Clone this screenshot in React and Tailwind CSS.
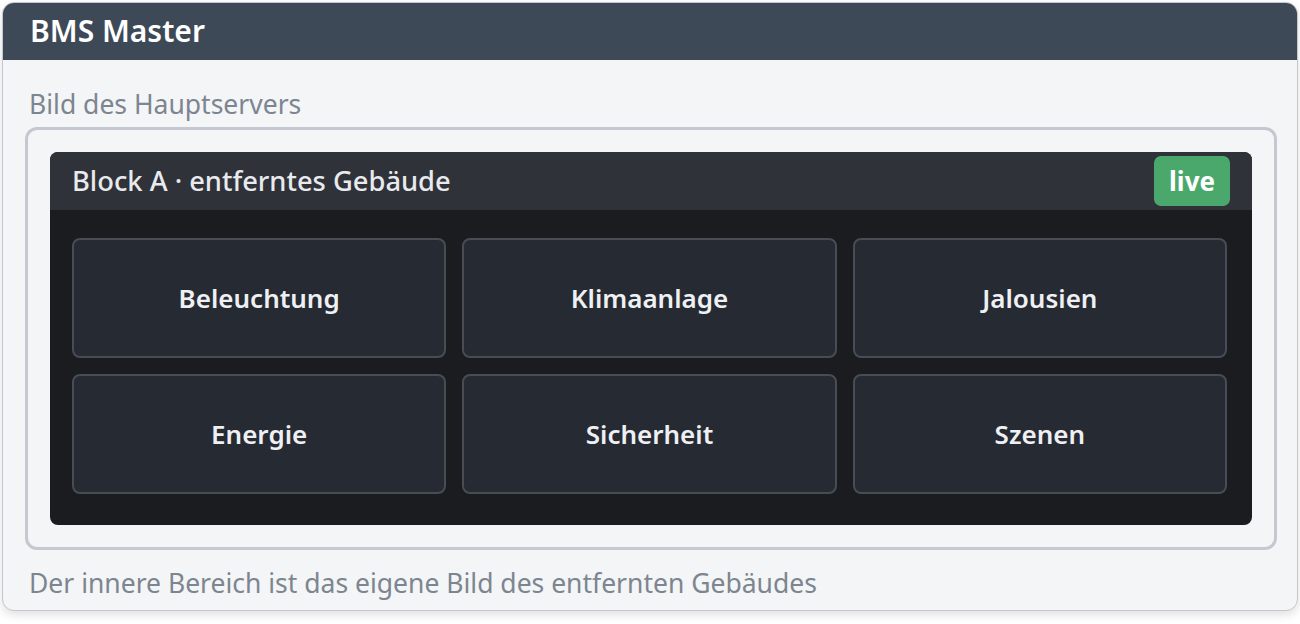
const tiles = ["Beleuchtung", "Klimaanlage", "Jalousien", "Energie", "Sicherheit", "Szenen"];

export default function App() {
  return (
    <div className="w-[1300px] h-[624px] bg-white p-[2px]" style={{ fontFamily: "'Noto Sans', 'Open Sans', sans-serif" }}>
      <div className="flex flex-col rounded-[12px] border border-[#c3c8cf] bg-[#f3f5f7] shadow-[0_4px_10px_rgba(0,0,0,0.12)] overflow-hidden">
        <div className="h-[57px] bg-[#3e4958] flex items-center px-[27px]">
          <h1 className="text-[30px] font-semibold text-white leading-none -mt-[2px]">BMS Master</h1>
        </div>
        <div className="pl-[22px] pr-[20px] pt-[27px] pb-[10px] flex flex-col">
          <p className="text-[26.5px] text-[#7d8590] leading-[34px] pl-[4px]">Bild des Hauptservers</p>
          <div className="mt-[6px] rounded-[12px] border-[3px] border-[#c4c9d1] p-[22px]">
            <div className="rounded-[8px] bg-[#1b1c1f] overflow-hidden">
              <div className="h-[58px] bg-[#2f3239] flex items-center justify-between pl-[22px] pr-[22px]">
                <span className="text-[27.3px] font-medium text-[#e8eaed] leading-none">Block A · entferntes Gebäude</span>
                <span className="h-[50px] px-[15px] rounded-[7px] bg-[#4aa86c] flex items-center text-[26px] font-bold text-white">live</span>
              </div>
              <div className="grid grid-cols-3 gap-[16px] pl-[22px] pr-[25px] pt-[28px] pb-[31px]">
                {tiles.map((t) => (
                  <button key={t} className="h-[120px] rounded-[8px] border-2 border-[#474c55] bg-[#262a32] text-[26px] font-semibold text-[#eef0f3]">
                    {t}
                  </button>
                ))}
              </div>
            </div>
          </div>
          <p className="mt-[16px] text-[26.5px] text-[#7d8590] leading-[34px] pl-[4px]">Der innere Bereich ist das eigene Bild des entfernten Gebäudes</p>
        </div>
      </div>
    </div>
  );
}
